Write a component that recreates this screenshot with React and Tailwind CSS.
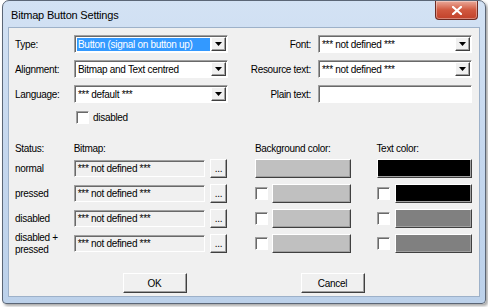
import React from "react";

const FONT = { fontFamily: '"Liberation Sans", Arial, sans-serif' };

const sunken =
  "border border-t-[#a0a0a0] border-l-[#a0a0a0] border-r-white border-b-white shadow-[inset_1px_1px_0_#696969]";
const raised =
  "border border-t-white border-l-white border-r-[#404040] border-b-[#404040] shadow-[inset_-1px_-1px_0_#a0a0a0]";

const DropButton = () => (
  <div className={`w-[15px] h-full flex items-center justify-center bg-[#f0f0f0] ${raised}`}>
    <svg width="7" height="4" viewBox="0 0 7 4">
      <path d="M0 0h7L3.5 4z" fill="#000" />
    </svg>
  </div>
);

const Combo = ({ text, selected }) => (
  <div className={`flex h-[18px] bg-white p-[1px] ${sunken}`}>
    <div className="flex-1 flex items-center pl-[1px] pr-[1px] overflow-hidden whitespace-nowrap">
      {selected ? (
        <span className="w-full h-[13px] leading-[13px] bg-[#3399ff] text-white pl-[1px]">{text}</span>
      ) : (
        <span className="pl-[1px]">{text}</span>
      )}
    </div>
    <DropButton />
  </div>
);

const Checkbox = () => <div className={`w-[13px] h-[13px] bg-white shrink-0 ${sunken}`} />;

const Swatch = ({ color }) => <div className={`flex-1 h-[19px] ${color} ${raised}`} />;

const rows = [
  { label: "normal", check: false, bg: "bg-[#c0c0c0]", fg: "bg-black" },
  { label: "pressed", check: true, bg: "bg-[#c0c0c0]", fg: "bg-black" },
  { label: "disabled", check: true, bg: "bg-[#c0c0c0]", fg: "bg-[#808080]" },
  { label: "disabled +\npressed", check: true, bg: "bg-[#c0c0c0]", fg: "bg-[#808080]" },
];

export default function App() {
  return (
    <div className="w-[488px] h-[307px] bg-white overflow-hidden text-[10px] tracking-[-0.3px] text-black" style={FONT}>
      <div className="ml-[2px] w-[484px] h-[304px] rounded-t-[7px] rounded-b-[4px] border border-[#5b6676] bg-gradient-to-b from-[#d3e2f4] via-[#c5d7ee] to-[#bcd1ea] px-[5px] pb-[6px] shadow-[2px_2px_3px_rgba(0,0,0,0.35)] flex flex-col">
        {/* Title bar */}
        <div className="h-[26px] flex items-start justify-between">
          <div className="pt-[7px] pl-[3px] text-[11px] tracking-[-0.2px] leading-[14px] text-black">Bitmap Button Settings</div>
          <div className="mr-[2px] w-[43px] h-[19px] rounded-b-[4px] border border-t-0 border-[#6e2b22] bg-gradient-to-b from-[#e9a99a] via-[#d0583f] to-[#c2412a] flex items-center justify-center shadow-[inset_0_0_0_1px_rgba(255,255,255,0.35)]">
            <svg width="10" height="9" viewBox="0 0 10 9">
              <path d="M1 1l8 7M9 1L1 8" stroke="#fff" strokeWidth="2.2" strokeLinecap="square" />
            </svg>
          </div>
        </div>

        {/* Client area */}
        <div className="flex-1 bg-[#f0f0f0] border border-[#9db1c9] pl-[6px] pr-[7px] pt-[7px] flex flex-col">
          <div className="grid grid-cols-[59px_154px_90px_154px] gap-y-[7px] items-center">
            <div>Type:</div>
            <Combo text="Button (signal on button up)" selected />
            <div className="text-right pr-[7px]">Font:</div>
            <Combo text="*** not defined ***" />

            <div>Alignment:</div>
            <Combo text="Bitmap and Text centred" />
            <div className="text-right pr-[7px]">Resource text:</div>
            <Combo text="*** not defined ***" />

            <div>Language:</div>
            <Combo text="*** default ***" />
            <div className="text-right pr-[7px]">Plain text:</div>
            <div className={`h-[18px] bg-white ${sunken}`} />
          </div>

          <div className="flex items-center mt-[8px] pl-[61px] h-[13px]">
            <Checkbox />
            <span className="ml-[4px]">disabled</span>
          </div>

          {/* Header */}
          <div className="flex mt-[18px] h-[13px] items-center">
            <div className="w-[59px]">Status:</div>
            <div className="w-[154px]">Bitmap:</div>
            <div className="w-[28px]" />
            <div className="w-[96px]">Background color:</div>
            <div className="w-[26px]" />
            <div className="w-[96px]">Text color:</div>
          </div>

          <div className="flex flex-col gap-[6px] mt-[4px]">
            {rows.map((r) => (
              <div key={r.label} className="flex items-center h-[19px]">
                <div className="w-[59px] whitespace-pre-line leading-[12px]">{r.label}</div>
                <div className={`w-[132px] h-[17px] flex items-center pl-[3px] bg-[#f0f0f0] ${sunken}`}>
                  *** not defined ***
                </div>
                <div className={`ml-[5px] w-[17px] h-[19px] flex items-end justify-center pb-[3px] leading-[10px] bg-[#f0f0f0] ${raised}`}>
                  ...
                </div>
                <div className="ml-[28px] w-[96px] flex items-center">
                  {r.check && <Checkbox />}
                  {r.check && <div className="w-[4px]" />}
                  <Swatch color={r.bg} />
                </div>
                <div className="ml-[26px] w-[96px] flex items-center">
                  {r.check && <Checkbox />}
                  {r.check && <div className="w-[5px]" />}
                  <Swatch color={r.fg} />
                </div>
              </div>
            ))}
          </div>

          <div className="flex justify-center gap-[114px] mt-[20px]">
            <div className={`w-[64px] h-[20px] flex items-center justify-center bg-[#f0f0f0] ${raised}`}>OK</div>
            <div className={`w-[64px] h-[20px] flex items-center justify-center bg-[#f0f0f0] ${raised}`}>Cancel</div>
          </div>
        </div>
      </div>
    </div>
  );
}
